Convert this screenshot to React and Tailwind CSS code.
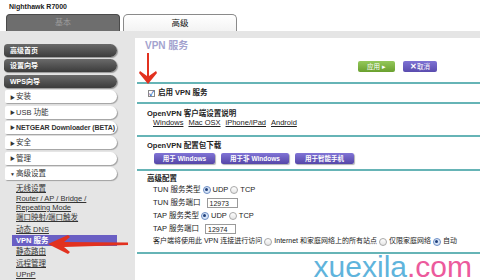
import React from "react";

const font = "font-['Liberation_Sans','Noto_Sans_CJK_SC',sans-serif]";

function Radio({ on }) {
  return on ? (
    <span className="inline-flex w-[8px] h-[8px] rounded-full border border-[#6f8fc4] bg-[#d6e4f7] items-center justify-center mx-[2px]">
      <span className="w-[3px] h-[3px] rounded-full bg-[#1f3f7a]" />
    </span>
  ) : (
    <span className="inline-block w-[8px] h-[8px] rounded-full border border-[#a8a8a8] bg-gradient-to-b from-white to-[#e4e4e4] mx-[2px]" />
  );
}

function DarkItem({ children }) {
  return (
    <div className="h-[13px] w-[113px] ml-[4px] rounded-l-[4px] rounded-r-[7px] bg-gradient-to-b from-[#6a6a6a] to-[#3c3c3c] shadow-[1px_1px_1px_rgba(0,0,0,0.35)] text-white font-bold text-[7px] leading-[13px] pl-[6px]">
      {children}
    </div>
  );
}

function WhiteItem({ children, open }) {
  return (
    <div className="h-[13px] w-[112px] ml-[5px] rounded-l-[2px] rounded-r-[7px] bg-white shadow-[1px_1px_1px_rgba(0,0,0,0.3)] text-[#333] text-[7.5px] leading-[13px] pl-[5px] whitespace-nowrap overflow-hidden">
      <span className="text-[5px] align-middle mr-[1px]">{open ? "▼" : "▶"}</span>
      {children}
    </div>
  );
}

function SideLink({ children, active }) {
  if (active) {
    return (
      <div className="h-[11.3px] w-[105px] ml-[12px] bg-[#6a5fc4] text-white font-bold text-[7.5px] leading-[11.3px] pl-[4px]">
        {children}
      </div>
    );
  }
  return (
    <div className="ml-[16px] text-[#333] text-[7.5px] leading-[11.3px] underline">{children}</div>
  );
}

function PurpleBtn({ children, w }) {
  return (
    <div className={`${w} h-[11px] rounded-[2px] bg-gradient-to-b from-[#8174d6] to-[#5546a8] shadow-[1px_1px_1px_rgba(0,0,0,0.3)] text-white font-bold text-[6.5px] leading-[11px] text-center`}>
      {children}
    </div>
  );
}

export default function App() {
  return (
    <div className={`${font} relative w-[480px] h-[280px] overflow-hidden bg-white`}>
      {/* header */}
      <div className="h-[14px] pl-[9px] pt-[2px] text-[7px] font-bold leading-[9px] text-[#222]">Nighthawk R7000</div>
      <div className="flex h-[17px] pl-[6px] gap-[3px]">
        <div className="w-[114px] h-[17px] rounded-t-[4px] bg-[#6e6e6e] border border-[#4a4a4a] border-b-0 text-[#9c9c9c] text-[8px] leading-[16px] text-center">
          基本
        </div>
        <div className="w-[114px] h-[17px] rounded-t-[5px] bg-gradient-to-b from-white to-[#f3f3f3] border border-[#8a8a8a] border-b-0 text-[#111] text-[8.5px] leading-[16px] text-center">
          高级
        </div>
      </div>

      <div className="flex bg-[#e5e5e5] h-[249px]">
        {/* sidebar */}
        <div className="w-[135px] pt-[13px] flex flex-col">
          <div className="flex flex-col gap-[2.4px]">
            <DarkItem>高级首页</DarkItem>
            <DarkItem>设置向导</DarkItem>
            <DarkItem>WPS向导</DarkItem>
            <WhiteItem>安装</WhiteItem>
            <WhiteItem>USB 功能</WhiteItem>
            <WhiteItem>
              <span className="text-[7px] font-bold tracking-[-0.1px]">NETGEAR Downloader (BETA)</span>
            </WhiteItem>
            <WhiteItem>安全</WhiteItem>
            <WhiteItem>管理</WhiteItem>
            <WhiteItem open>高级设置</WhiteItem>
          </div>
          <div className="mt-[3px] flex flex-col">
            <SideLink>无线设置</SideLink>
            <div className="ml-[16px] text-[#333] text-[7.5px] leading-[8.5px] underline pt-[1px]">
              Router / AP / Bridge /<br />Repeating Mode
            </div>
            <SideLink>端口映射/端口触发</SideLink>
            <SideLink>动态 DNS</SideLink>
            <SideLink active>VPN 服务</SideLink>
            <SideLink>静态路由</SideLink>
            <SideLink>远程管理</SideLink>
            <SideLink>UPnP</SideLink>
          </div>
        </div>

        {/* main */}
        <div className="flex-1 mt-[7px] bg-white">
          <div className="h-[14px] pt-[2px] pl-[10px] text-[10px] leading-[12px] font-bold text-[#a3a3cf]">VPN 服务</div>
          <div className="mt-[9px] flex justify-end gap-[8px] pr-[43px]">
            <div className="w-[37px] h-[11px] rounded-[2px] bg-gradient-to-b from-[#94c85a] to-[#6aa02e] text-white text-[6.5px] leading-[11px] text-center">
              应用 ▸
            </div>
            <div className="w-[34px] h-[11px] rounded-[2px] bg-gradient-to-b from-[#7e72d4] to-[#5a4bae] text-white text-[6.5px] leading-[11px] text-center">
              <span className="text-[8px] font-bold">✕</span>取消
            </div>
          </div>

          <div className="mt-[10px] ml-[2px] border-t-2 border-[#66b4b6]">
            {/* enable */}
            <div className="h-[18px] flex items-center pl-[11px] text-[7.5px] font-bold text-[#222] border-b-2 border-[#66b4b6] box-content">
              <span className="inline-flex w-[7px] h-[7px] border border-[#888] bg-white items-center justify-center text-[#2d5fb8] text-[7px] leading-none mr-[3px] font-bold">✓</span>
              启用 VPN 服务
            </div>
            {/* client docs */}
            <div className="h-[26px] pt-[5px] pl-[10px] text-[7.5px] text-[#222] border-b-2 border-[#66b4b6] box-content">
              <div className="leading-[9px] font-bold">OpenVPN 客户端设置说明</div>
              <div className="leading-[9px] pl-[6px] flex gap-[5px] underline">
                <span>Windows</span>
                <span>Mac OSX</span>
                <span>iPhone/iPad</span>
                <span>Android</span>
              </div>
            </div>
            {/* download */}
            <div className="h-[28px] pt-[4px] pl-[10px] text-[7.5px] text-[#222] border-b-2 border-[#66b4b6] box-content">
              <div className="leading-[9px] font-bold">OpenVPN 配置包下载</div>
              <div className="mt-[3px] pl-[7px] flex gap-[6px]">
                <PurpleBtn w="w-[61px]">用于 Windows</PurpleBtn>
                <PurpleBtn w="w-[68px]">用于非 Windows</PurpleBtn>
                <PurpleBtn w="w-[59px]">用于智能手机</PurpleBtn>
              </div>
            </div>
            {/* advanced */}
            <div className="h-[78px] pt-[3px] pl-[10px] text-[7.5px] text-[#222] border-b-2 border-[#66b4b6] box-content">
              <div className="leading-[9px] font-bold">高级配置</div>
              <div className="pl-[6px]">
                <div className="h-[13px] flex items-center">
                  TUN 服务类型 <Radio on />UDP <Radio />TCP
                </div>
                <div className="h-[13px] flex items-center">
                  TUN 服务端口
                  <span className="ml-[6px] w-[31px] h-[10px] border border-[#9a9a9a] bg-white text-[7px] leading-[9px] pl-[2px]">12973</span>
                </div>
                <div className="h-[13px] flex items-center">
                  TAP 服务类型 <Radio on />UDP <Radio />TCP
                </div>
                <div className="h-[13px] flex items-center">
                  TAP 服务端口
                  <span className="ml-[6px] w-[31px] h-[10px] border border-[#9a9a9a] bg-white text-[7px] leading-[9px] pl-[2px]">12974</span>
                </div>
                <div className="h-[13px] flex items-center whitespace-nowrap text-[7px]">
                  客户端将使用此 VPN 连接进行访问 <Radio />Internet 和家庭网络上的所有站点 <Radio />仅限家庭网络 <Radio on />自动
                </div>
              </div>
            </div>
          </div>

          <div className="mt-[1px] flex justify-end pr-[8px] text-[30px] leading-[24px] font-['Liberation_Sans',sans-serif]">
            <span className="text-[#5fb4dc]">xuexila</span>
            <span className="text-[#ec5a9c]">.com</span>
          </div>
        </div>
      </div>

      {/* red annotation arrows */}
      <svg className="absolute left-[136px] top-[52px]" width="24" height="34" viewBox="0 0 24 34">
        <path d="M11 1 L13 1 L13 24 L20 19 L21 21 L12 32 L3 21 L4 19 L11 24 Z" fill="#e2311f" />
      </svg>
      <svg className="absolute left-[46px] top-[232px]" width="84" height="24" viewBox="0 0 84 24">
        <path d="M2 12 L22 3 L24 5 L18 10 L82 10.5 L82 13 L18 15 L24 20 L22 22 Z" fill="#e2311f" />
      </svg>
    </div>
  );
}
